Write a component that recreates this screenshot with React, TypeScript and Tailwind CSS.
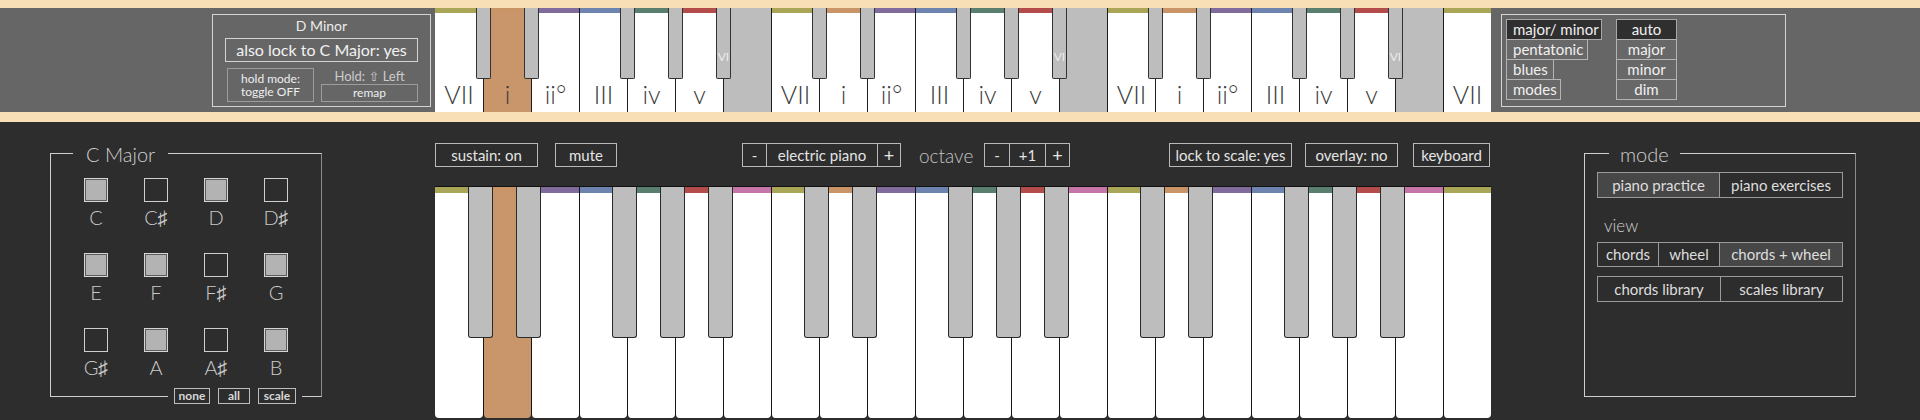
import React from "react";

const WK = 48;
const NW = 22;
const STRIP = [
  "bg-[#a9a657]",
  "bg-[#c99566]",
  "bg-[#806c9c]",
  "bg-[#6d84ae]",
  "bg-[#5b7f6f]",
  "bg-[#b54c4c]",
  "bg-[#c774a9]",
];
const ROMANS = ["VII", "i", "ii°", "III", "iv", "v", ""];
const BLACK_AFTER = [0, 1, 3, 4, 5];
const whites = Array.from({ length: NW }, (_, i) => i);
const blacks = whites.filter((i) => i < NW - 1 && BLACK_AFTER.includes(i % 7));

function TopKeyboard() {
  return (
    <div className="relative flex h-full w-[1056px] shrink-0">
      {whites.map((i) => {
        const n = i % 7;
        const bg = n === 6 ? "bg-[#bdbdbd]" : i === 1 ? "bg-[#c9956a]" : "bg-white";
        return (
          <div
            key={i}
            className={`flex h-full w-[48px] shrink-0 flex-col ${i === 0 ? "" : "border-l border-[#1e1e1e]"} ${bg}`}
          >
            {n !== 6 ? <div className={`h-[5px] ${STRIP[n]}`} /> : null}
            <div className="flex flex-1 items-end justify-center pb-[5px] text-[25px] font-light leading-none text-[#3a3a3a]">
              {ROMANS[n]}
            </div>
          </div>
        );
      })}
      {blacks.map((i) => (
        <div
          key={"b" + i}
          className="absolute top-0 flex h-[71px] w-[15px] items-end justify-center rounded-b-[2px] border border-t-0 border-[#333333] bg-[#bdbdbd] pb-[15px]"
          style={{ left: (i + 1) * WK - 7 }}
        >
          {i % 7 === 5 ? (
            <span className="text-[12px] leading-none text-[#ececec]">VI</span>
          ) : null}
        </div>
      ))}
    </div>
  );
}

function BottomKeyboard() {
  return (
    <div className="relative flex h-[232px] w-[1056px] border-t border-[#111111]">
      {whites.map((i) => {
        const n = i % 7;
        const bg = i === 1 ? "bg-[#c9956a]" : "bg-white";
        return (
          <div
            key={i}
            className={`flex h-full w-[48px] shrink-0 flex-col overflow-hidden rounded-b-[4px] ${i === 0 ? "" : "border-l border-[#151515]"} ${bg}`}
          >
            <div className={`h-[6px] ${STRIP[n]}`} />
          </div>
        );
      })}
      {blacks.map((i) => (
        <div
          key={"b" + i}
          className="absolute top-0 h-[151px] w-[25px] rounded-b-[3px] border border-t-0 border-[#2a2a2a] bg-[#bdbdbd]"
          style={{ left: (i + 1) * WK - 15 }}
        />
      ))}
    </div>
  );
}

const NOTES = ["C", "C♯", "D", "D♯", "E", "F", "F♯", "G", "G♯", "A", "A♯", "B"];
const CHECKED = [true, false, true, false, true, true, false, true, false, true, false, true];

function ScaleBox() {
  return (
    <div className="relative h-[244px] w-[272px] border border-[#cfcfcf] border-r-[#8c8c8c] pt-[24px]">
      <div className="absolute left-[22px] top-0 -translate-y-1/2 bg-[#2d2d2d] px-[13px] text-[20px] font-light leading-[24px] text-[#d0d0d0]">
        C Major
      </div>
      <div className="mx-auto grid w-[240px] grid-cols-4 gap-y-[24px]">
        {NOTES.map((n, i) => (
          <div key={n} className="flex flex-col items-center">
            {CHECKED[i] ? (
              <div className="h-[24px] w-[24px] border border-[#d6d6d6] bg-[#b3b3b3] shadow-[inset_0_0_0_1px_#5c5c5c]" />
            ) : (
              <div className="h-[24px] w-[24px] border border-[#cfcfcf]" />
            )}
            <div className="mt-[3px] text-[20px] font-light leading-[24px] text-[#cacaca]">{n}</div>
          </div>
        ))}
      </div>
      <div className="absolute bottom-0 left-[117px] flex translate-y-1/2 items-center gap-[7px] bg-[#2d2d2d] px-[6px]">
        <div className="flex h-[16px] w-[36px] items-center justify-center border border-[#bdbdbd] text-[12px] font-bold leading-none text-[#d8d8d8]">
          none
        </div>
        <div className="ml-px flex h-[16px] w-[32px] items-center justify-center border border-[#bdbdbd] text-[12px] font-bold leading-none text-[#d8d8d8]">
          all
        </div>
        <div className="ml-px flex h-[16px] w-[38px] items-center justify-center border border-[#bdbdbd] text-[12px] font-bold leading-none text-[#d8d8d8]">
          scale
        </div>
      </div>
    </div>
  );
}

function ModeBox() {
  const btn = "flex h-full items-center justify-center border border-[#9a9a9a] text-[15px] text-[#dedede]";
  return (
    <div className="relative h-[244px] w-[272px] border border-[#cfcfcf] border-r-[#8c8c8c] px-[12px] pt-[18px]">
      <div className="absolute left-[24px] top-0 -translate-y-1/2 bg-[#2d2d2d] px-[11px] text-[20px] font-light leading-[24px] text-[#d0d0d0]">
        mode
      </div>
      <div className="flex h-[26px]">
        <div className={`${btn} w-[123px] bg-[#474747]`}>piano practice</div>
        <div className={`${btn} -ml-px flex-1`}>piano exercises</div>
      </div>
      <div className="mt-[18px] pl-[7px] text-[17px] font-light leading-[20px] text-[#cfcfcf]">view</div>
      <div className="mt-[6px] flex h-[25px]">
        <div className={`${btn} w-[62px]`}>chords</div>
        <div className={`${btn} -ml-px w-[62px]`}>wheel</div>
        <div className={`${btn} -ml-px flex-1 bg-[#474747]`}>chords + wheel</div>
      </div>
      <div className="mt-[9px] flex h-[26px]">
        <div className={`${btn} w-[124px]`}>chords library</div>
        <div className={`${btn} -ml-px flex-1`}>scales library</div>
      </div>
    </div>
  );
}

function ControlRow() {
  const b = "flex h-full items-center justify-center border border-[#b9b9b9] text-[15px] text-[#e4e4e4]";
  return (
    <div className="flex h-[24px] items-center">
      <div className={`${b} w-[103px]`}>sustain: on</div>
      <div className={`${b} ml-[17px] w-[62px]`}>mute</div>
      <div className={`${b} ml-[125px] w-[25px]`}>-</div>
      <div className={`${b} -ml-px w-[112px]`}>electric piano</div>
      <div className={`${b} -ml-px w-[24px] text-[18px]`}>+</div>
      <div className="ml-[18px] w-[49px] text-[19px] font-light leading-none text-[#c4c4c4]">octave</div>
      <div className={`${b} ml-[16px] w-[26px]`}>-</div>
      <div className={`${b} -ml-px w-[37px]`}>+1</div>
      <div className={`${b} -ml-px w-[25px] text-[18px]`}>+</div>
      <div className={`${b} ml-[99px] w-[123px]`}>lock to scale: yes</div>
      <div className={`${b} ml-[13px] w-[93px]`}>overlay: no</div>
      <div className={`${b} ml-[15px] w-[77px]`}>keyboard</div>
    </div>
  );
}

function ScaleTypeBox() {
  const left = [
    { t: "major/ minor", w: "w-[96px]", sel: true },
    { t: "pentatonic", w: "w-[82px]", sel: false },
    { t: "blues", w: "w-[48px]", sel: false },
    { t: "modes", w: "w-[55px]", sel: false },
  ];
  const right = [
    { t: "auto", sel: true },
    { t: "major", sel: false },
    { t: "minor", sel: false },
    { t: "dim", sel: false },
  ];
  return (
    <div className="flex h-[93px] w-[285px] gap-[14px] border border-[#d4d4d4] pl-[4px] pt-[4px]">
      <div className="flex flex-col items-start">
        {left.map((x, i) => (
          <div
            key={x.t}
            className={`flex h-[21px] items-center border pl-[6px] text-[15px] leading-none text-[#f0f0f0] ${x.w} ${i === 0 ? "" : "-mt-px"} ${x.sel ? "border-[#a8a8a8] bg-[#2f2f2f]" : "border-[#b4b4b4] bg-[#686868]"}`}
          >
            {x.t}
          </div>
        ))}
      </div>
      <div className="flex w-[61px] flex-col">
        {right.map((x, i) => (
          <div
            key={x.t}
            className={`flex h-[21px] items-center justify-center border text-[15px] leading-none text-[#f0f0f0] ${i === 0 ? "" : "-mt-px"} ${x.sel ? "border-[#a8a8a8] bg-[#2f2f2f]" : "border-[#b4b4b4] bg-[#686868]"}`}
          >
            {x.t}
          </div>
        ))}
      </div>
    </div>
  );
}

function ChordBox() {
  return (
    <div className="flex h-[93px] w-[219px] flex-col border border-[#d4d4d4] px-[12px]">
      <div className="mt-[2px] text-center text-[14px] leading-[18px] text-[#ececec]">D Minor</div>
      <div className="mt-[3px] flex h-[24px] items-center justify-center border border-[#d4d4d4] text-[16px] leading-none text-[#f2f2f2]">
        also lock to C Major: yes
      </div>
      <div className="mt-[6px] flex gap-[7px]">
        <div className="ml-[2px] flex h-[34px] w-[87px] flex-col items-center justify-center border border-[#9c9c9c] text-[12px] leading-[13px] text-[#eeeeee]">
          <span>hold mode:</span>
          <span>toggle OFF</span>
        </div>
        <div className="flex flex-1 flex-col">
          <div className="flex h-[16px] items-center justify-center text-[13px] leading-none text-[#cccccc]">
            Hold:&nbsp;<span className="[font-family:'DejaVu_Sans',sans-serif] text-[13px]">⇧</span>&nbsp;Left
          </div>
          <div className="flex h-[18px] items-center justify-center border border-[#9c9c9c] text-[12px] leading-none text-[#eeeeee]">
            remap
          </div>
        </div>
      </div>
    </div>
  );
}

export default function App() {
  return (
    <div className="flex h-[420px] w-[1920px] flex-col overflow-hidden bg-[#2d2d2d] [font-family:'Lato','DejaVu_Sans',sans-serif]">
      <div className="h-[8px] shrink-0 bg-[#f8dfb6]" />
      <div className="flex h-[104px] shrink-0 bg-[#666666]">
        <div className="w-[435px] shrink-0 pl-[212px] pt-[6px]">
          <ChordBox />
        </div>
        <TopKeyboard />
        <div className="pl-[10px] pt-[6px]">
          <ScaleTypeBox />
        </div>
      </div>
      <div className="h-[10px] shrink-0 bg-[#f8dfb6]" />
      <div className="flex flex-1">
        <div className="w-[435px] shrink-0 pl-[50px] pt-[31px]">
          <ScaleBox />
        </div>
        <div className="flex w-[1056px] shrink-0 flex-col pt-[21px]">
          <ControlRow />
          <div className="mt-[19px]">
            <BottomKeyboard />
          </div>
        </div>
        <div className="pl-[93px] pt-[31px]">
          <ModeBox />
        </div>
      </div>
    </div>
  );
}
